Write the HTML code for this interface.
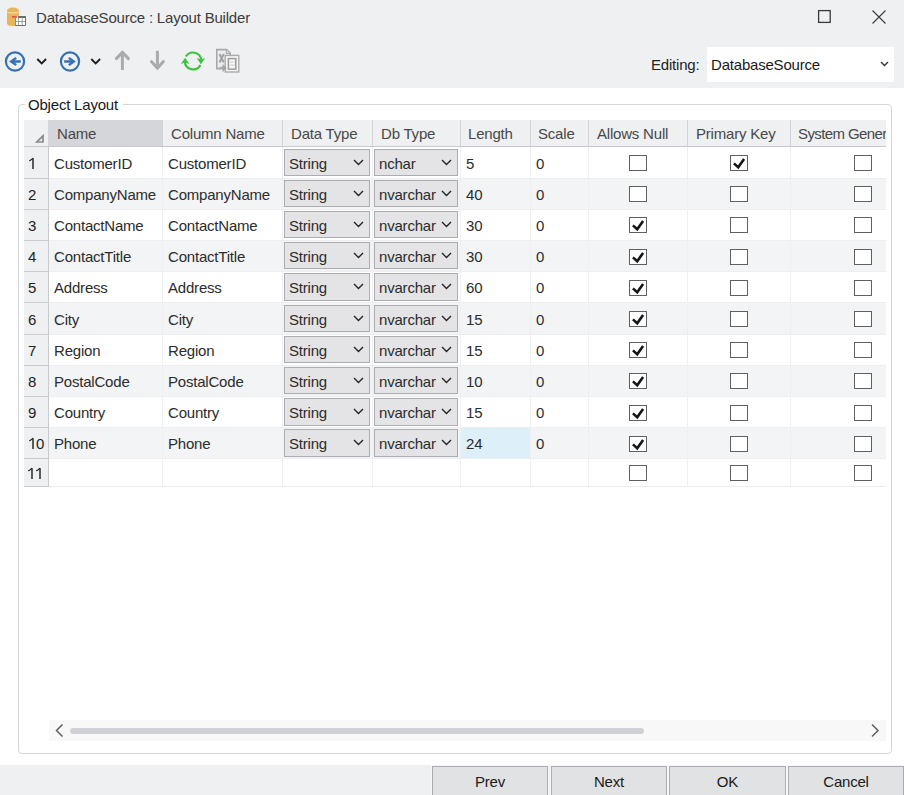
<!DOCTYPE html><html><head><meta charset="utf-8"><title>Layout Builder</title><style>
*{margin:0;padding:0;box-sizing:border-box}
html,body{width:904px;height:795px;overflow:hidden;background:#ffffff}
body{position:relative;font-family:"Liberation Sans",sans-serif;font-size:15px;color:#2c2c2c;letter-spacing:-0.2px}
.a{position:absolute}
.t{position:absolute;white-space:nowrap;line-height:17px;height:17px}
</style></head><body>
<div class="a" style="left:0;top:0;width:904px;height:88px;background:#eff0f2"></div>
<svg class="a" style="left:6px;top:6px" width="22" height="22" viewBox="0 0 22 22">
<path d="M1 4.5 V17.5 C1 19.2 3.9 20 7 20 C10.1 20 13 19.2 13 17.5 V4.5 Z" fill="#e8b55c"/>
<ellipse cx="7" cy="4.5" rx="6" ry="3" fill="#e8b55c"/>
<path d="M1.2 5.8 C2.5 7.3 11.5 7.3 12.8 5.8" stroke="#f3d9a8" stroke-width="1.2" fill="none"/>
<rect x="9" y="10" width="11" height="10" fill="#ffffff"/>
<rect x="12" y="10" width="8" height="2" fill="#6e6e6e"/>
<path d="M9 15.5 H20 M12.5 12 V20 M16.2 12 V20" stroke="#a0a0a0" stroke-width="1" fill="none"/>
<path d="M9 19.5 H19.5 V10" stroke="#707070" stroke-width="1" fill="none"/>
<path d="M9.5 12 V20" stroke="#8a8a8a" stroke-width="1" fill="none"/>
<rect x="6" y="10" width="5" height="1.8" fill="#de5a3c"/>
</svg>
<div class="t" style="left:36px;top:9px;color:#3c3c3c">DatabaseSource : Layout Builder</div>
<svg class="a" style="left:816px;top:8px" width="18" height="18" viewBox="0 0 18 18"><rect x="2.6" y="2.6" width="11.6" height="11.8" fill="none" stroke="#3a3a3a" stroke-width="1.3"/></svg>
<svg class="a" style="left:870px;top:8px" width="18" height="18" viewBox="0 0 18 18"><path d="M2.5 2.5 L15.5 15.5 M15.5 2.5 L2.5 15.5" stroke="#3a3a3a" stroke-width="1.1" fill="none"/></svg>
<svg class="a" style="left:0;top:44px" width="250" height="36" viewBox="0 0 250 36">
<circle cx="15" cy="17.5" r="9.1" fill="none" stroke="#3470b6" stroke-width="2.2"/>
<path d="M20.8 17.5 H12" stroke="#3470b6" stroke-width="2.5"/>
<path d="M16.2 13.9 L11.2 17.5 L16.2 21.1" stroke="#3470b6" stroke-width="2.4" fill="none"/>
<path d="M37.3 15 L41.7 19.5 L46.1 15" stroke="#1e1e1e" stroke-width="1.8" fill="none"/>
<circle cx="70" cy="17.5" r="9.1" fill="none" stroke="#3470b6" stroke-width="2.2"/>
<path d="M64.2 17.5 H73" stroke="#3470b6" stroke-width="2.5"/>
<path d="M68.8 13.9 L73.8 17.5 L68.8 21.1" stroke="#3470b6" stroke-width="2.4" fill="none"/>
<path d="M91.3 15 L95.7 19.5 L100.1 15" stroke="#1e1e1e" stroke-width="1.8" fill="none"/>
<path d="M122.4 26 V8.5" stroke="#ababab" stroke-width="3" fill="none"/><path d="M116.4 14.6 L122.4 8.2 L128.4 14.6" stroke="#ababab" stroke-width="3" fill="none" stroke-linecap="round" stroke-linejoin="round"/>
<path d="M157.4 6.8 V24" stroke="#ababab" stroke-width="3" fill="none"/><path d="M151.4 17.6 L157.4 24.3 L163.4 17.6" stroke="#ababab" stroke-width="3" fill="none" stroke-linecap="round" stroke-linejoin="round"/>
<path d="M185.9 12.5 A8.3 8.3 0 0 1 201.2 15.8" stroke="#3cc43c" stroke-width="2.2" fill="none"/>
<path d="M200.4 21.0 A8.3 8.3 0 0 1 184.8 17.6" stroke="#3cc43c" stroke-width="2.2" fill="none"/>
<path d="M200.9 20.2 L196.6 14.0 L200.9 15.4 L205.2 14.0 Z" fill="#3cc43c"/>
<path d="M185.1 13.8 L180.8 20.0 L185.1 18.6 L189.4 20.0 Z" fill="#3cc43c"/>
<g>
<path d="M216.8 5.6 H226.6 L230.2 9.2 V24.6 H216.8 Z" fill="#eeeeee" stroke="#a8a8a8" stroke-width="1.6"/>
<path d="M226.4 5.6 V9.4 H230.2" fill="#dcdcdc" stroke="#b0b0b0" stroke-width="1.2"/>
<path d="M219.5 10 L223.8 18.5 M223.8 10 L219.5 18.5" stroke="#a2a2a2" stroke-width="2"/>
<rect x="225.2" y="11.4" width="13.6" height="16.6" fill="#f4f4f4" stroke="#ababab" stroke-width="1.4"/>
<rect x="228.4" y="14.6" width="7.4" height="10.6" fill="#f6f6f6" stroke="#9d9d9d" stroke-width="1.5"/>
<path d="M229.5 18 H235 M229.5 21.2 H235" stroke="#d2d2d2" stroke-width="1.2"/>
<path d="M219.5 23.8 H223.5" stroke="#a8a8a8" stroke-width="2"/>
<path d="M222.6 19.8 L226.6 23.9 L222.6 28.2 Z" fill="#a5a5a5"/>
</g>
</svg>
<div class="t" style="left:651px;top:56px;color:#222">Editing:</div>
<div class="a" style="left:707px;top:47px;width:187px;height:35px;background:#ffffff"></div>
<div class="t" style="left:711px;top:56px;color:#1a1a1a">DatabaseSource</div>
<svg class="a" style="left:878px;top:58px" width="12" height="12" viewBox="0 0 12 12"><path d="M3 4 L6.5 7.5 L10 4" stroke="#333" stroke-width="1.4" fill="none"/></svg>
<div class="a" style="left:18px;top:104px;width:874px;height:650px;border:1px solid #d4d5d8;border-radius:4px"></div>
<div class="a" style="left:25px;top:96px;width:98px;height:14px;background:#fff"></div>
<div class="t" style="left:28px;top:96px;color:#1a1a1a">Object Layout</div>
<div class="a" style="left:24px;top:120px;width:862px;height:26px;background:#eff0f2"></div>
<div class="a" style="left:48px;top:120px;width:114px;height:26px;background:#d5d6da"></div>
<div class="a" style="left:24px;top:146px;width:862px;height:1px;background:#c7c8cc"></div>
<div class="a" style="left:162px;top:120px;width:1px;height:26px;background:#d3d4d8"></div>
<div class="a" style="left:282px;top:120px;width:1px;height:26px;background:#d3d4d8"></div>
<div class="a" style="left:372px;top:120px;width:1px;height:26px;background:#d3d4d8"></div>
<div class="a" style="left:460px;top:120px;width:1px;height:26px;background:#d3d4d8"></div>
<div class="a" style="left:530px;top:120px;width:1px;height:26px;background:#d3d4d8"></div>
<div class="a" style="left:588px;top:120px;width:1px;height:26px;background:#d3d4d8"></div>
<div class="a" style="left:687px;top:120px;width:1px;height:26px;background:#d3d4d8"></div>
<div class="a" style="left:790px;top:120px;width:1px;height:26px;background:#d3d4d8"></div>
<svg class="a" style="left:34px;top:133px" width="12" height="12" viewBox="0 0 12 12"><path d="M9 2.8 V9 H2.8 Z" fill="none" stroke="#8a8a8a" stroke-width="1.7" stroke-linejoin="miter"/></svg>
<div class="a" style="left:24px;top:120px;width:862px;height:26px;overflow:hidden">
<div class="t" style="left:33px;top:5px;color:#484848">Name</div>
<div class="t" style="left:147px;top:5px;color:#484848">Column Name</div>
<div class="t" style="left:267px;top:5px;color:#484848">Data Type</div>
<div class="t" style="left:357px;top:5px;color:#484848">Db Type</div>
<div class="t" style="left:444px;top:5px;color:#484848">Length</div>
<div class="t" style="left:514px;top:5px;color:#484848">Scale</div>
<div class="t" style="left:573px;top:5px;color:#484848">Allows Null</div>
<div class="t" style="left:672px;top:5px;color:#484848">Primary Key</div>
<div class="t" style="left:774px;top:5px;color:#484848;letter-spacing:-0.6px">System Generated</div>
</div>
<div class="a" style="left:49px;top:147px;width:837px;height:31px;background:#ffffff"></div>
<div class="a" style="left:24px;top:147px;width:24px;height:31px;background:#eff0f2"></div>
<div class="a" style="left:24px;top:178px;width:24px;height:1px;background:#c9cacd"></div>
<svg class="a" style="left:27.5px;top:157px" width="8" height="14" viewBox="0 0 8 14"><path d="M5 1.2 V12" stroke="#222" stroke-width="1.45" fill="none"/><path d="M1.3 3.9 C2.6 3.3 4 2.4 5 1.2" stroke="#222" stroke-width="1.3" fill="none"/></svg>
<div class="t" style="left:54px;top:155px">CustomerID</div>
<div class="t" style="left:168px;top:155px">CustomerID</div>
<div class="a" style="left:284px;top:149px;width:86px;height:27px;background:#e4e4e6;border:1px solid #acadb0"></div><div class="t" style="left:289px;top:155px">String</div><svg class="a" style="left:353px;top:157px" width="12" height="10" viewBox="0 0 12 10"><path d="M1 3 L5.5 7.5 L10 3" stroke="#222" stroke-width="1.35" fill="none"/></svg>
<div class="a" style="left:374px;top:149px;width:84px;height:27px;background:#e4e4e6;border:1px solid #acadb0"></div><div class="t" style="left:379px;top:155px">nchar</div><svg class="a" style="left:441px;top:157px" width="12" height="10" viewBox="0 0 12 10"><path d="M1 3 L5.5 7.5 L10 3" stroke="#222" stroke-width="1.35" fill="none"/></svg>
<div class="t" style="left:466px;top:155px">5</div>
<div class="t" style="left:536px;top:155px">0</div>
<div class="a" style="left:629px;top:155px;width:18px;height:16px;border:1px solid #606060;background:#fff"></div>
<div class="a" style="left:730px;top:155px;width:18px;height:16px;border:1px solid #606060;background:#fff"></div><svg class="a" style="left:730px;top:155px" width="18" height="16" viewBox="0 0 18 16"><path d="M3.9 8.4 L8.2 12.2 L14.1 3.9" stroke="#151515" stroke-width="2.6" fill="none"/></svg>
<div class="a" style="left:854px;top:155px;width:18px;height:16px;border:1px solid #606060;background:#fff"></div>
<div class="a" style="left:49px;top:179px;width:837px;height:30px;background:#f3f4f6"></div>
<div class="a" style="left:49px;top:178px;width:837px;height:1px;background:#eceef0"></div>
<div class="a" style="left:24px;top:179px;width:24px;height:30px;background:#eff0f2"></div>
<div class="a" style="left:24px;top:209px;width:24px;height:1px;background:#c9cacd"></div>
<div class="t" style="left:28px;top:186px;color:#222">2</div>
<div class="t" style="left:54px;top:186px">CompanyName</div>
<div class="t" style="left:168px;top:186px">CompanyName</div>
<div class="a" style="left:284px;top:180px;width:86px;height:27px;background:#e4e4e6;border:1px solid #acadb0"></div><div class="t" style="left:289px;top:186px">String</div><svg class="a" style="left:353px;top:188px" width="12" height="10" viewBox="0 0 12 10"><path d="M1 3 L5.5 7.5 L10 3" stroke="#222" stroke-width="1.35" fill="none"/></svg>
<div class="a" style="left:374px;top:180px;width:84px;height:27px;background:#e4e4e6;border:1px solid #acadb0"></div><div class="t" style="left:379px;top:186px">nvarchar</div><svg class="a" style="left:441px;top:188px" width="12" height="10" viewBox="0 0 12 10"><path d="M1 3 L5.5 7.5 L10 3" stroke="#222" stroke-width="1.35" fill="none"/></svg>
<div class="t" style="left:466px;top:186px">40</div>
<div class="t" style="left:536px;top:186px">0</div>
<div class="a" style="left:629px;top:186px;width:18px;height:16px;border:1px solid #606060;background:#fff"></div>
<div class="a" style="left:730px;top:186px;width:18px;height:16px;border:1px solid #606060;background:#fff"></div>
<div class="a" style="left:854px;top:186px;width:18px;height:16px;border:1px solid #606060;background:#fff"></div>
<div class="a" style="left:49px;top:210px;width:837px;height:30px;background:#ffffff"></div>
<div class="a" style="left:49px;top:209px;width:837px;height:1px;background:#eceef0"></div>
<div class="a" style="left:24px;top:210px;width:24px;height:30px;background:#eff0f2"></div>
<div class="a" style="left:24px;top:240px;width:24px;height:1px;background:#c9cacd"></div>
<div class="t" style="left:28px;top:217px;color:#222">3</div>
<div class="t" style="left:54px;top:217px">ContactName</div>
<div class="t" style="left:168px;top:217px">ContactName</div>
<div class="a" style="left:284px;top:211px;width:86px;height:27px;background:#e4e4e6;border:1px solid #acadb0"></div><div class="t" style="left:289px;top:217px">String</div><svg class="a" style="left:353px;top:219px" width="12" height="10" viewBox="0 0 12 10"><path d="M1 3 L5.5 7.5 L10 3" stroke="#222" stroke-width="1.35" fill="none"/></svg>
<div class="a" style="left:374px;top:211px;width:84px;height:27px;background:#e4e4e6;border:1px solid #acadb0"></div><div class="t" style="left:379px;top:217px">nvarchar</div><svg class="a" style="left:441px;top:219px" width="12" height="10" viewBox="0 0 12 10"><path d="M1 3 L5.5 7.5 L10 3" stroke="#222" stroke-width="1.35" fill="none"/></svg>
<div class="t" style="left:466px;top:217px">30</div>
<div class="t" style="left:536px;top:217px">0</div>
<div class="a" style="left:629px;top:217px;width:18px;height:16px;border:1px solid #606060;background:#fff"></div><svg class="a" style="left:629px;top:217px" width="18" height="16" viewBox="0 0 18 16"><path d="M3.9 8.4 L8.2 12.2 L14.1 3.9" stroke="#151515" stroke-width="2.6" fill="none"/></svg>
<div class="a" style="left:730px;top:217px;width:18px;height:16px;border:1px solid #606060;background:#fff"></div>
<div class="a" style="left:854px;top:217px;width:18px;height:16px;border:1px solid #606060;background:#fff"></div>
<div class="a" style="left:49px;top:241px;width:837px;height:30px;background:#f3f4f6"></div>
<div class="a" style="left:49px;top:240px;width:837px;height:1px;background:#eceef0"></div>
<div class="a" style="left:24px;top:241px;width:24px;height:30px;background:#eff0f2"></div>
<div class="a" style="left:24px;top:271px;width:24px;height:1px;background:#c9cacd"></div>
<div class="t" style="left:28px;top:248px;color:#222">4</div>
<div class="t" style="left:54px;top:248px">ContactTitle</div>
<div class="t" style="left:168px;top:248px">ContactTitle</div>
<div class="a" style="left:284px;top:242px;width:86px;height:27px;background:#e4e4e6;border:1px solid #acadb0"></div><div class="t" style="left:289px;top:248px">String</div><svg class="a" style="left:353px;top:250px" width="12" height="10" viewBox="0 0 12 10"><path d="M1 3 L5.5 7.5 L10 3" stroke="#222" stroke-width="1.35" fill="none"/></svg>
<div class="a" style="left:374px;top:242px;width:84px;height:27px;background:#e4e4e6;border:1px solid #acadb0"></div><div class="t" style="left:379px;top:248px">nvarchar</div><svg class="a" style="left:441px;top:250px" width="12" height="10" viewBox="0 0 12 10"><path d="M1 3 L5.5 7.5 L10 3" stroke="#222" stroke-width="1.35" fill="none"/></svg>
<div class="t" style="left:466px;top:248px">30</div>
<div class="t" style="left:536px;top:248px">0</div>
<div class="a" style="left:629px;top:249px;width:18px;height:16px;border:1px solid #606060;background:#fff"></div><svg class="a" style="left:629px;top:249px" width="18" height="16" viewBox="0 0 18 16"><path d="M3.9 8.4 L8.2 12.2 L14.1 3.9" stroke="#151515" stroke-width="2.6" fill="none"/></svg>
<div class="a" style="left:730px;top:249px;width:18px;height:16px;border:1px solid #606060;background:#fff"></div>
<div class="a" style="left:854px;top:249px;width:18px;height:16px;border:1px solid #606060;background:#fff"></div>
<div class="a" style="left:49px;top:272px;width:837px;height:30px;background:#ffffff"></div>
<div class="a" style="left:49px;top:271px;width:837px;height:1px;background:#eceef0"></div>
<div class="a" style="left:24px;top:272px;width:24px;height:30px;background:#eff0f2"></div>
<div class="a" style="left:24px;top:302px;width:24px;height:1px;background:#c9cacd"></div>
<div class="t" style="left:28px;top:279px;color:#222">5</div>
<div class="t" style="left:54px;top:279px">Address</div>
<div class="t" style="left:168px;top:279px">Address</div>
<div class="a" style="left:284px;top:273px;width:86px;height:28px;background:#e4e4e6;border:1px solid #acadb0"></div><div class="t" style="left:289px;top:279px">String</div><svg class="a" style="left:353px;top:281px" width="12" height="10" viewBox="0 0 12 10"><path d="M1 3 L5.5 7.5 L10 3" stroke="#222" stroke-width="1.35" fill="none"/></svg>
<div class="a" style="left:374px;top:273px;width:84px;height:28px;background:#e4e4e6;border:1px solid #acadb0"></div><div class="t" style="left:379px;top:279px">nvarchar</div><svg class="a" style="left:441px;top:281px" width="12" height="10" viewBox="0 0 12 10"><path d="M1 3 L5.5 7.5 L10 3" stroke="#222" stroke-width="1.35" fill="none"/></svg>
<div class="t" style="left:466px;top:279px">60</div>
<div class="t" style="left:536px;top:279px">0</div>
<div class="a" style="left:629px;top:280px;width:18px;height:16px;border:1px solid #606060;background:#fff"></div><svg class="a" style="left:629px;top:280px" width="18" height="16" viewBox="0 0 18 16"><path d="M3.9 8.4 L8.2 12.2 L14.1 3.9" stroke="#151515" stroke-width="2.6" fill="none"/></svg>
<div class="a" style="left:730px;top:280px;width:18px;height:16px;border:1px solid #606060;background:#fff"></div>
<div class="a" style="left:854px;top:280px;width:18px;height:16px;border:1px solid #606060;background:#fff"></div>
<div class="a" style="left:49px;top:303px;width:837px;height:31px;background:#f3f4f6"></div>
<div class="a" style="left:49px;top:302px;width:837px;height:1px;background:#eceef0"></div>
<div class="a" style="left:24px;top:303px;width:24px;height:31px;background:#eff0f2"></div>
<div class="a" style="left:24px;top:334px;width:24px;height:1px;background:#c9cacd"></div>
<div class="t" style="left:28px;top:311px;color:#222">6</div>
<div class="t" style="left:54px;top:311px">City</div>
<div class="t" style="left:168px;top:311px">City</div>
<div class="a" style="left:284px;top:305px;width:86px;height:27px;background:#e4e4e6;border:1px solid #acadb0"></div><div class="t" style="left:289px;top:311px">String</div><svg class="a" style="left:353px;top:313px" width="12" height="10" viewBox="0 0 12 10"><path d="M1 3 L5.5 7.5 L10 3" stroke="#222" stroke-width="1.35" fill="none"/></svg>
<div class="a" style="left:374px;top:305px;width:84px;height:27px;background:#e4e4e6;border:1px solid #acadb0"></div><div class="t" style="left:379px;top:311px">nvarchar</div><svg class="a" style="left:441px;top:313px" width="12" height="10" viewBox="0 0 12 10"><path d="M1 3 L5.5 7.5 L10 3" stroke="#222" stroke-width="1.35" fill="none"/></svg>
<div class="t" style="left:466px;top:311px">15</div>
<div class="t" style="left:536px;top:311px">0</div>
<div class="a" style="left:629px;top:311px;width:18px;height:16px;border:1px solid #606060;background:#fff"></div><svg class="a" style="left:629px;top:311px" width="18" height="16" viewBox="0 0 18 16"><path d="M3.9 8.4 L8.2 12.2 L14.1 3.9" stroke="#151515" stroke-width="2.6" fill="none"/></svg>
<div class="a" style="left:730px;top:311px;width:18px;height:16px;border:1px solid #606060;background:#fff"></div>
<div class="a" style="left:854px;top:311px;width:18px;height:16px;border:1px solid #606060;background:#fff"></div>
<div class="a" style="left:49px;top:335px;width:837px;height:30px;background:#ffffff"></div>
<div class="a" style="left:49px;top:334px;width:837px;height:1px;background:#eceef0"></div>
<div class="a" style="left:24px;top:335px;width:24px;height:30px;background:#eff0f2"></div>
<div class="a" style="left:24px;top:365px;width:24px;height:1px;background:#c9cacd"></div>
<div class="t" style="left:28px;top:342px;color:#222">7</div>
<div class="t" style="left:54px;top:342px">Region</div>
<div class="t" style="left:168px;top:342px">Region</div>
<div class="a" style="left:284px;top:336px;width:86px;height:27px;background:#e4e4e6;border:1px solid #acadb0"></div><div class="t" style="left:289px;top:342px">String</div><svg class="a" style="left:353px;top:344px" width="12" height="10" viewBox="0 0 12 10"><path d="M1 3 L5.5 7.5 L10 3" stroke="#222" stroke-width="1.35" fill="none"/></svg>
<div class="a" style="left:374px;top:336px;width:84px;height:27px;background:#e4e4e6;border:1px solid #acadb0"></div><div class="t" style="left:379px;top:342px">nvarchar</div><svg class="a" style="left:441px;top:344px" width="12" height="10" viewBox="0 0 12 10"><path d="M1 3 L5.5 7.5 L10 3" stroke="#222" stroke-width="1.35" fill="none"/></svg>
<div class="t" style="left:466px;top:342px">15</div>
<div class="t" style="left:536px;top:342px">0</div>
<div class="a" style="left:629px;top:342px;width:18px;height:16px;border:1px solid #606060;background:#fff"></div><svg class="a" style="left:629px;top:342px" width="18" height="16" viewBox="0 0 18 16"><path d="M3.9 8.4 L8.2 12.2 L14.1 3.9" stroke="#151515" stroke-width="2.6" fill="none"/></svg>
<div class="a" style="left:730px;top:342px;width:18px;height:16px;border:1px solid #606060;background:#fff"></div>
<div class="a" style="left:854px;top:342px;width:18px;height:16px;border:1px solid #606060;background:#fff"></div>
<div class="a" style="left:49px;top:366px;width:837px;height:30px;background:#f3f4f6"></div>
<div class="a" style="left:49px;top:365px;width:837px;height:1px;background:#eceef0"></div>
<div class="a" style="left:24px;top:366px;width:24px;height:30px;background:#eff0f2"></div>
<div class="a" style="left:24px;top:396px;width:24px;height:1px;background:#c9cacd"></div>
<div class="t" style="left:28px;top:373px;color:#222">8</div>
<div class="t" style="left:54px;top:373px">PostalCode</div>
<div class="t" style="left:168px;top:373px">PostalCode</div>
<div class="a" style="left:284px;top:367px;width:86px;height:27px;background:#e4e4e6;border:1px solid #acadb0"></div><div class="t" style="left:289px;top:373px">String</div><svg class="a" style="left:353px;top:375px" width="12" height="10" viewBox="0 0 12 10"><path d="M1 3 L5.5 7.5 L10 3" stroke="#222" stroke-width="1.35" fill="none"/></svg>
<div class="a" style="left:374px;top:367px;width:84px;height:27px;background:#e4e4e6;border:1px solid #acadb0"></div><div class="t" style="left:379px;top:373px">nvarchar</div><svg class="a" style="left:441px;top:375px" width="12" height="10" viewBox="0 0 12 10"><path d="M1 3 L5.5 7.5 L10 3" stroke="#222" stroke-width="1.35" fill="none"/></svg>
<div class="t" style="left:466px;top:373px">10</div>
<div class="t" style="left:536px;top:373px">0</div>
<div class="a" style="left:629px;top:373px;width:18px;height:16px;border:1px solid #606060;background:#fff"></div><svg class="a" style="left:629px;top:373px" width="18" height="16" viewBox="0 0 18 16"><path d="M3.9 8.4 L8.2 12.2 L14.1 3.9" stroke="#151515" stroke-width="2.6" fill="none"/></svg>
<div class="a" style="left:730px;top:373px;width:18px;height:16px;border:1px solid #606060;background:#fff"></div>
<div class="a" style="left:854px;top:373px;width:18px;height:16px;border:1px solid #606060;background:#fff"></div>
<div class="a" style="left:49px;top:397px;width:837px;height:30px;background:#ffffff"></div>
<div class="a" style="left:49px;top:396px;width:837px;height:1px;background:#eceef0"></div>
<div class="a" style="left:24px;top:397px;width:24px;height:30px;background:#eff0f2"></div>
<div class="a" style="left:24px;top:427px;width:24px;height:1px;background:#c9cacd"></div>
<div class="t" style="left:28px;top:404px;color:#222">9</div>
<div class="t" style="left:54px;top:404px">Country</div>
<div class="t" style="left:168px;top:404px">Country</div>
<div class="a" style="left:284px;top:398px;width:86px;height:28px;background:#e4e4e6;border:1px solid #acadb0"></div><div class="t" style="left:289px;top:404px">String</div><svg class="a" style="left:353px;top:406px" width="12" height="10" viewBox="0 0 12 10"><path d="M1 3 L5.5 7.5 L10 3" stroke="#222" stroke-width="1.35" fill="none"/></svg>
<div class="a" style="left:374px;top:398px;width:84px;height:28px;background:#e4e4e6;border:1px solid #acadb0"></div><div class="t" style="left:379px;top:404px">nvarchar</div><svg class="a" style="left:441px;top:406px" width="12" height="10" viewBox="0 0 12 10"><path d="M1 3 L5.5 7.5 L10 3" stroke="#222" stroke-width="1.35" fill="none"/></svg>
<div class="t" style="left:466px;top:404px">15</div>
<div class="t" style="left:536px;top:404px">0</div>
<div class="a" style="left:629px;top:405px;width:18px;height:16px;border:1px solid #606060;background:#fff"></div><svg class="a" style="left:629px;top:405px" width="18" height="16" viewBox="0 0 18 16"><path d="M3.9 8.4 L8.2 12.2 L14.1 3.9" stroke="#151515" stroke-width="2.6" fill="none"/></svg>
<div class="a" style="left:730px;top:405px;width:18px;height:16px;border:1px solid #606060;background:#fff"></div>
<div class="a" style="left:854px;top:405px;width:18px;height:16px;border:1px solid #606060;background:#fff"></div>
<div class="a" style="left:49px;top:428px;width:837px;height:30px;background:#f3f4f6"></div>
<div class="a" style="left:49px;top:427px;width:837px;height:1px;background:#eceef0"></div>
<div class="a" style="left:24px;top:428px;width:24px;height:30px;background:#eff0f2"></div>
<div class="a" style="left:24px;top:458px;width:24px;height:1px;background:#c9cacd"></div>
<svg class="a" style="left:27.5px;top:437px" width="8" height="14" viewBox="0 0 8 14"><path d="M5 1.2 V12" stroke="#222" stroke-width="1.45" fill="none"/><path d="M1.3 3.9 C2.6 3.3 4 2.4 5 1.2" stroke="#222" stroke-width="1.3" fill="none"/></svg>
<div class="t" style="left:36px;top:435px;color:#222">0</div>
<div class="a" style="left:461px;top:428px;width:69px;height:30px;background:#ddf0fa"></div>
<div class="t" style="left:54px;top:435px">Phone</div>
<div class="t" style="left:168px;top:435px">Phone</div>
<div class="a" style="left:284px;top:429px;width:86px;height:28px;background:#e4e4e6;border:1px solid #acadb0"></div><div class="t" style="left:289px;top:435px">String</div><svg class="a" style="left:353px;top:437px" width="12" height="10" viewBox="0 0 12 10"><path d="M1 3 L5.5 7.5 L10 3" stroke="#222" stroke-width="1.35" fill="none"/></svg>
<div class="a" style="left:374px;top:429px;width:84px;height:28px;background:#e4e4e6;border:1px solid #acadb0"></div><div class="t" style="left:379px;top:435px">nvarchar</div><svg class="a" style="left:441px;top:437px" width="12" height="10" viewBox="0 0 12 10"><path d="M1 3 L5.5 7.5 L10 3" stroke="#222" stroke-width="1.35" fill="none"/></svg>
<div class="t" style="left:466px;top:435px">24</div>
<div class="t" style="left:536px;top:435px">0</div>
<div class="a" style="left:629px;top:436px;width:18px;height:16px;border:1px solid #606060;background:#fff"></div><svg class="a" style="left:629px;top:436px" width="18" height="16" viewBox="0 0 18 16"><path d="M3.9 8.4 L8.2 12.2 L14.1 3.9" stroke="#151515" stroke-width="2.6" fill="none"/></svg>
<div class="a" style="left:730px;top:436px;width:18px;height:16px;border:1px solid #606060;background:#fff"></div>
<div class="a" style="left:854px;top:436px;width:18px;height:16px;border:1px solid #606060;background:#fff"></div>
<div class="a" style="left:49px;top:459px;width:837px;height:27px;background:#ffffff"></div>
<div class="a" style="left:49px;top:458px;width:837px;height:1px;background:#eceef0"></div>
<div class="a" style="left:24px;top:459px;width:24px;height:27px;background:#eff0f2"></div>
<div class="a" style="left:24px;top:486px;width:24px;height:1px;background:#c9cacd"></div>
<svg class="a" style="left:27.200000000000003px;top:467px" width="8" height="14" viewBox="0 0 8 14"><path d="M5 1.2 V12" stroke="#222" stroke-width="1.45" fill="none"/><path d="M1.3 3.9 C2.6 3.3 4 2.4 5 1.2" stroke="#222" stroke-width="1.3" fill="none"/></svg>
<svg class="a" style="left:35.3px;top:467px" width="8" height="14" viewBox="0 0 8 14"><path d="M5 1.2 V12" stroke="#222" stroke-width="1.45" fill="none"/><path d="M1.3 3.9 C2.6 3.3 4 2.4 5 1.2" stroke="#222" stroke-width="1.3" fill="none"/></svg>
<div class="a" style="left:629px;top:465px;width:18px;height:16px;border:1px solid #606060;background:#fff"></div>
<div class="a" style="left:730px;top:465px;width:18px;height:16px;border:1px solid #606060;background:#fff"></div>
<div class="a" style="left:854px;top:465px;width:18px;height:16px;border:1px solid #606060;background:#fff"></div>
<div class="a" style="left:162px;top:147px;width:1px;height:339px;background:#eeeff1"></div>
<div class="a" style="left:282px;top:147px;width:1px;height:339px;background:#eeeff1"></div>
<div class="a" style="left:372px;top:147px;width:1px;height:339px;background:#eeeff1"></div>
<div class="a" style="left:460px;top:147px;width:1px;height:339px;background:#eeeff1"></div>
<div class="a" style="left:530px;top:147px;width:1px;height:339px;background:#eeeff1"></div>
<div class="a" style="left:588px;top:147px;width:1px;height:339px;background:#eeeff1"></div>
<div class="a" style="left:687px;top:147px;width:1px;height:339px;background:#eeeff1"></div>
<div class="a" style="left:790px;top:147px;width:1px;height:339px;background:#eeeff1"></div>
<div class="a" style="left:49px;top:486px;width:837px;height:1px;background:#ececee"></div>
<div class="a" style="left:48px;top:147px;width:1px;height:340px;background:#c9cacd"></div>
<div class="a" style="left:49px;top:720px;width:837px;height:21px;background:#f8f8f9"></div>
<svg class="a" style="left:52px;top:722px" width="14" height="17" viewBox="0 0 14 17"><path d="M10.5 2.5 L4.5 8.5 L10.5 14.5" stroke="#5e5e5e" stroke-width="1.5" fill="none"/></svg>
<svg class="a" style="left:868px;top:722px" width="14" height="17" viewBox="0 0 14 17"><path d="M4 2.5 L10 8.5 L4 14.5" stroke="#5e5e5e" stroke-width="1.5" fill="none"/></svg>
<div class="a" style="left:70px;top:728px;width:574px;height:6px;background:#d0d1d5;border-radius:3px"></div>
<div class="a" style="left:0;top:765px;width:904px;height:30px;background:#eff0f2"></div>
<div class="a" style="left:432px;top:766px;width:116px;height:40px;background:#e1e2e4;border:1px solid #acadb0;box-shadow:0 0 0 1px #f7f8fa"></div>
<div class="t" style="left:432px;top:773px;width:116px;text-align:center;color:#1a1a1a">Prev</div>
<div class="a" style="left:551px;top:766px;width:116px;height:40px;background:#e1e2e4;border:1px solid #acadb0;box-shadow:0 0 0 1px #f7f8fa"></div>
<div class="t" style="left:551px;top:773px;width:116px;text-align:center;color:#1a1a1a">Next</div>
<div class="a" style="left:669px;top:766px;width:117px;height:40px;background:#e1e2e4;border:1px solid #acadb0;box-shadow:0 0 0 1px #f7f8fa"></div>
<div class="t" style="left:669px;top:773px;width:117px;text-align:center;color:#1a1a1a">OK</div>
<div class="a" style="left:788px;top:766px;width:116px;height:40px;background:#e1e2e4;border:1px solid #acadb0;box-shadow:0 0 0 1px #f7f8fa"></div>
<div class="t" style="left:788px;top:773px;width:116px;text-align:center;color:#1a1a1a">Cancel</div>
</body></html>
